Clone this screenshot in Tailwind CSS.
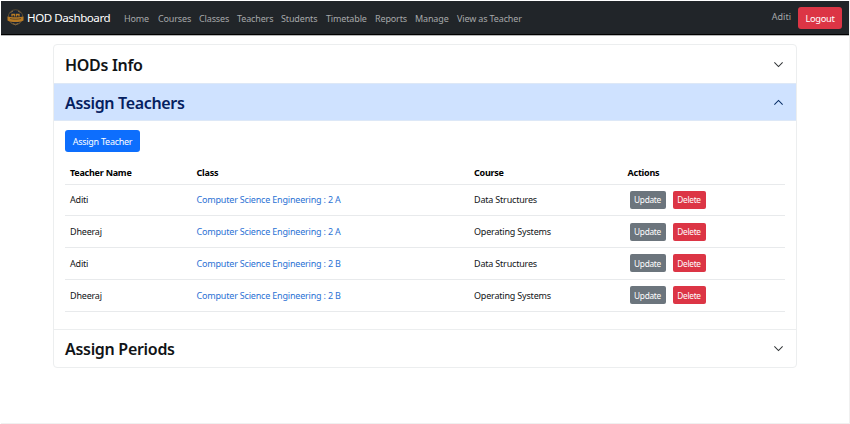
<!DOCTYPE html>
<html lang="en">
<head>
<meta charset="utf-8">
<title>HOD Dashboard</title>
<script src="https://cdn.jsdelivr.net/npm/@tailwindcss/browser@4"></script>
</head>
<body class="h-[424px] overflow-hidden bg-white pt-px pl-px font-['Noto_Sans','Open_Sans',sans-serif] text-[9px] text-[#111417]">
<div class="h-[423px] w-[849px] border-r border-b border-[#f0f0f0]">
  <nav class="flex h-[34px] items-center border-b border-black bg-[#212529] whitespace-nowrap text-[#a6a8a9] shadow-[0_1px_0_#b5b6b7]">
    <svg class="ml-[6px] h-[17px] w-[17px] shrink-0" viewBox="0 0 34 34" fill="none">
      <circle cx="17" cy="16" r="14.5" fill="#1c2534" stroke="#6b5430" stroke-width="1.6"/>
      <path d="M7 7l5-3m10 0 5 3" stroke="#8b6d43" stroke-width="2"/>
      <path d="M10 15v-4h5v4m4 0v-4h5v4" stroke="#b97b22" stroke-width="2.6"/>
      <path d="M1 15c6 2 26 2 32 0v8c-7 4-25 4-32 0z" fill="#b77a25"/>
      <path d="M6 19c6 2 16 2 22 0" stroke="#4f3f24" stroke-width="1.6"/>
      <path d="M7 27c5 5 15 5 20 0" stroke="#76613f" stroke-width="1.6"/>
      <path d="m12 29 5 3 5-3" stroke="#8b6d43" stroke-width="1.6"/>
    </svg>
    <div class="ml-[3px] w-[97px] pt-px text-[11.6px] tracking-[-0.46px] text-white">HOD Dashboard</div>
    <div class="flex pt-[2px] tracking-[-0.14px]">
      <a class="w-[34px]">Home</a><a class="w-[41px]">Courses</a><a class="w-[38px]">Classes</a><a class="w-[44px]">Teachers</a><a class="w-[45px]">Students</a><a class="w-[49px]">Timetable</a><a class="w-[40px]">Reports</a><a class="w-[42px]">Manage</a><a>View as Teacher</a>
    </div>
    <span class="mr-[7px] ml-auto -mt-[2px]">Aditi</span>
    <button class="mr-[7px] flex h-[22px] w-[44px] items-center justify-center rounded-[3px] bg-[#dc3545] pt-[2px] text-[9.3px] tracking-[-0.3px] text-white">Logout</button>
  </nav>

  <main class="mt-[9px] ml-[52px] w-[744px] rounded-[4px] border border-[#eceeef]">
    <h2 class="flex h-[38px] items-center justify-between pr-[12px] pl-[11px] text-[16px] font-semibold tracking-[-0.3px]"><span class="pt-px">HODs Info</span>
      <svg class="h-[11px] w-[11px]" viewBox="0 0 16 16" fill="none" stroke="#303336" stroke-width="1.5"><path d="m2 5 6 6 6-6"/></svg>
    </h2>
    <section>
      <h2 class="flex h-[38px] items-center justify-between border-y border-[#dde8f7] bg-[#cfe2ff] pr-[12px] pl-[11px] text-[16px] font-semibold tracking-[-0.34px] text-[#052060]"><span class="pt-px">Assign Teachers</span>
        <svg class="h-[11px] w-[11px]" viewBox="0 0 16 16" fill="none" stroke="#052c65" stroke-width="1.5"><path d="m2 11 6-6 6 6"/></svg>
      </h2>
      <div class="h-[208px] px-[11px] pt-[9px]">
        <button class="flex h-[22px] w-[75px] items-center justify-center rounded-[3px] bg-[#0d6efd] pt-px text-[9px] tracking-[-0.26px] text-white">Assign Teacher</button>
        <table class="mt-[9px] w-[720px] table-fixed border-collapse text-left tracking-[-0.19px]">
          <colgroup><col class="w-[126.5px]"><col class="w-[277.5px]"><col class="w-[153.5px]"><col></colgroup>
          <thead><tr class="h-[23px] border-b border-[#e8eaec] tracking-[-0.24px] text-black [&>th]:pl-[5px] [&>th]:font-bold"><th>Teacher Name</th><th>Class</th><th>Course</th><th>Actions</th></tr></thead>
          <tbody id="rows"></tbody>
        </table>
      </div>
    </section>
    <h2 class="flex h-[38px] items-center justify-between border-t border-[#eceeef] pr-[12px] pl-[11px] text-[16px] font-semibold tracking-[-0.3px]"><span class="pt-px">Assign Periods</span>
      <svg class="h-[11px] w-[11px]" viewBox="0 0 16 16" fill="none" stroke="#303336" stroke-width="1.5"><path d="m2 5 6 6 6-6"/></svg>
    </h2>
  </main>
</div>
<script>
const assignments = [["Aditi","A","Data Structures"],["Dheeraj","A","Operating Systems"],["Aditi","B","Data Structures"],["Dheeraj","B","Operating Systems"]];
document.getElementById("rows").innerHTML = assignments.map(([name, section, course]) => `
<tr class="h-[31.8px] border-b border-[#e8eaec] [&>td]:p-0 [&>td]:pl-[5px]">
<td>${name}</td><td class="text-[#2b72d4]">Computer Science Engineering : 2 ${section}</td><td>${course}</td>
<td><div class="flex gap-[7px] pl-[2px] text-[8.3px] tracking-[-0.3px] text-white"><button class="h-[18px] w-[36px] rounded-[2px] bg-[#6c757d] pt-px">Update</button><button class="h-[18px] w-[33px] rounded-[2px] bg-[#dc3545] pt-px">Delete</button></div></td></tr>`).join("");
</script>
</body>
</html>
